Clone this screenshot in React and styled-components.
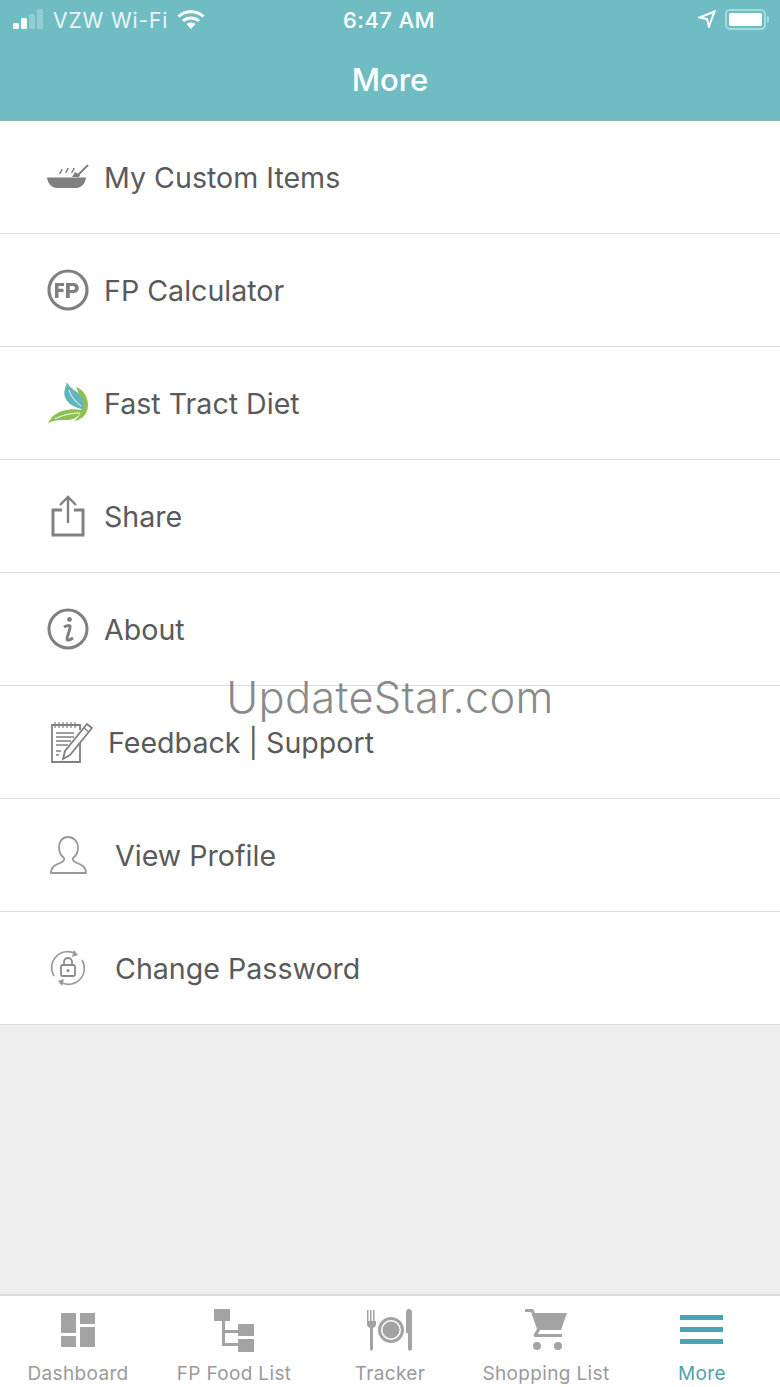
import styled, { createGlobalStyle } from "styled-components";

const GlobalStyle = createGlobalStyle`
  html, body {
    margin: 0;
    padding: 0;
    background: #eeeeee;
  }
  * {
    box-sizing: border-box;
  }
`;

const PanIcon = () => (
  <svg width="42" height="26" viewBox="0 0 42 26">
    <path d="M0 13.500h39c-.5 5-4 10-9 10.500H9c-5-.5-8.500-5.500-9-10.500z" fill="#808080" />
    <path d="M30 12l11-11" stroke="#808080" strokeWidth="2" />
    <path d="M25 13l3-5 5 3-1 2z" fill="#808080" />
    <path d="M13 10c-.5-2 2-2.500 2-5M19 9c-.5-2 2-2.500 2-5M25 9c-.5-2 2-2.500 2-5" fill="none" stroke="#808080" strokeWidth="1.500" />
  </svg>
);

const FpIcon = () => (
  <svg width="42" height="42" viewBox="0 0 42 42">
    <circle cx="21" cy="21" r="19" fill="none" stroke="#808080" strokeWidth="3.200" />
    <path d="M8 14h9v3h-5.500v2.800h5V23h-5v6H8zM19 14h7c3.500 0 5.800 2 5.800 5s-2.300 5-5.800 5h-3.200v5H19zm3.800 3v4H25.500c1.500 0 2.500-.7 2.500-2s-1-2-2.500-2z" fill="#808080" />
  </svg>
);

const LeafIcon = () => (
  <svg width="42" height="44" viewBox="0 0 42 44">
    <path d="M29 6c7 2 12 10 12 18 0 9-6 15-14 16 4-3 6-6 7-10 1-7-1-16-5-24z" fill="#8cc152" />
    <path d="M1 42c3-6 8-10 14-12 7-2 14-2 20-1-2 6-8 10-15 10-8 0-12 0-19 3z" fill="#8cc152" />
    <path d="M20 1c-1 5-4 9-2 15 2 6 9 11 18 12 1-7-1-13-6-17-4-3-8-5-10-10z" fill="#62b5bd" />
    <path d="M22 9c2 7 7 12 12 16" stroke="#fff" strokeWidth="1" fill="none" />
    <path d="M8 38c7-4 16-6 25-6" stroke="#fff" strokeWidth="1" fill="none" />
  </svg>
);

const ShareIcon = () => (
  <svg width="34" height="42" viewBox="0 0 34 42">
    <path d="M11 15H2v25h30V15h-9" fill="none" stroke="#808080" strokeWidth="3" />
    <path d="M17 28V2M9 10l8-8 8 8" fill="none" stroke="#808080" strokeWidth="2.400" />
  </svg>
);

const InfoIcon = () => (
  <svg width="42" height="42" viewBox="0 0 42 42">
    <circle cx="21" cy="21" r="19" fill="none" stroke="#808080" strokeWidth="3" />
    <circle cx="22.500" cy="11.500" r="2.400" fill="#808080" />
    <path d="M17 19c2-1 5-2 6-1 1 2-3 10-3 13 0 2 3 1 6-1" fill="none" stroke="#808080" strokeWidth="3" />
  </svg>
);

const NotesIcon = () => (
  <svg width="42" height="42" viewBox="0 0 42 42" overflow="visible">
    <path d="M33 20v21H5V4h28v5" fill="none" stroke="#808080" strokeWidth="1.800" />
    <path d="M8 1v6M12 1v6M16 1v6M20 1v6M24 1v6M28 1v6" stroke="#808080" strokeWidth="1.200" />
    <path d="M9 12h18M9 16h18M9 20h15M9 24h12M9 30h5M9 34h3" stroke="#808080" strokeWidth="1.600" />
    <path d="M40 3l5 4-22 27-7 4 2-8z" fill="#fff" stroke="#808080" strokeWidth="1.800" />
    <path d="M37 7l5 4" stroke="#808080" strokeWidth="1.500" />
  </svg>
);

const ProfileIcon = () => (
  <svg width="38" height="40" viewBox="0 0 38 40">
    <path d="M19 2c-6 0-9 5-9 10 0 5 2 9 5 11 1 2-1 4-4 5-5 2-9 4-9 10h35c0-6-4-8-9-10-3-1-5-3-4-5 3-2 5-6 5-11 0-5-4-10-10-10z" fill="none" stroke="#9a9a9a" strokeWidth="1.800" />
  </svg>
);

const LockIcon = () => (
  <svg width="36" height="36" viewBox="0 0 36 36">
    <path d="M4 26A16 16 0 0 1 26 4" fill="none" stroke="#9a9a9a" strokeWidth="1.600" />
    <path d="M32 10a16 16 0 0 1-22 22" fill="none" stroke="#9a9a9a" strokeWidth="1.600" />
    <path d="M24 0l4 5-6 2zM12 36l-4-5 6-2z" fill="#9a9a9a" />
    <rect x="11" y="15" width="14" height="11" rx="1.500" fill="none" stroke="#8a8a8a" strokeWidth="1.800" />
    <path d="M14 15v-3a4 4 0 0 1 8 0v3" fill="none" stroke="#8a8a8a" strokeWidth="1.800" />
    <circle cx="18" cy="20.500" r="1.500" fill="#8a8a8a" />
  </svg>
);

const DashboardIcon = () => (
  <svg width="34" height="34" viewBox="0 0 34 34" fill="#a3a3a3">
    <rect x="0" y="0" width="15" height="20" />
    <rect x="19" y="0" width="15" height="11" />
    <rect x="0" y="23" width="15" height="11" />
    <rect x="19" y="14" width="15" height="20" />
  </svg>
);

const TreeIcon = () => (
  <svg width="40" height="43" viewBox="0 0 40 43" fill="#a3a3a3">
    <rect x="0" y="0" width="16" height="12" />
    <rect x="24" y="15" width="16" height="12" />
    <rect x="24" y="30" width="16" height="13" />
    <path d="M8 12h3v9h13v3H11v10h13v3H8z" />
  </svg>
);

const TrackerIcon = () => (
  <svg width="46" height="42" viewBox="0 0 46 42" fill="#a3a3a3">
    <path d="M0 1h1.500v11H3V1h1.500v11H6V1h1.500v11H9V1v14c0 2-1 3-3 4v21c0 2-3 2-3 0V19c-2-1-3-2-3-4z" />
    <path d="M41 0c3 0 4 1 4 3v37c0 2-4 2-4 0V24h-2V4c0-2 1-4 2-4z" />
    <path d="M24 8a13 13 0 1 0 0 26 13 13 0 0 0 0-26zm0 3a10 10 0 1 1 0 20 10 10 0 0 1 0-20z" />
    <circle cx="24" cy="21" r="8.500" />
  </svg>
);

const CartIcon = () => (
  <svg width="42" height="42" viewBox="0 0 42 42" fill="#a3a3a3">
    <path d="M0 0h8l2 4h32l-6 17H15l-2 4h24v3H9.500l-1-2 3.500-6L6 3H0z" />
    <circle cx="12" cy="37" r="4" />
    <circle cx="33" cy="37" r="4" />
  </svg>
);

const MenuIcon = () => (
  <svg width="44" height="30" viewBox="0 0 44 30" fill="#4ba3b1">
    <rect x="0" y="0" width="43" height="5" />
    <rect x="0" y="12" width="43" height="5" />
    <rect x="0" y="24" width="43" height="5" />
  </svg>
);

const menuItems = [
  { label: "My Custom Items", icon: <PanIcon />, gap: 15 },
  { label: "FP Calculator", icon: <FpIcon />, gap: 15 },
  { label: "Fast Tract Diet", icon: <LeafIcon />, gap: 15 },
  { label: "Share", icon: <ShareIcon />, gap: 15 },
  { label: "About", icon: <InfoIcon />, gap: 15 },
  { label: "Feedback | Support", icon: <NotesIcon />, gap: 19 },
  { label: "View Profile", icon: <ProfileIcon />, gap: 26 },
  { label: "Change Password", icon: <LockIcon />, gap: 26 },
];

const tabs = [
  { label: "Dashboard", icon: <DashboardIcon /> },
  { label: "FP Food List", icon: <TreeIcon /> },
  { label: "Tracker", icon: <TrackerIcon /> },
  { label: "Shopping List", icon: <CartIcon /> },
  { label: "More", icon: <MenuIcon />, active: true },
];

export default function App() {
  return (
    <>
      <GlobalStyle />
      <Page>
        <Header>
          <StatusBar>
            <StatusSide>
              <Signal>
                <Bar $h={6} />
                <Bar $h={11} />
                <Bar $h={15} $dim />
                <Bar $h={20} $dim />
              </Signal>
              <Carrier>VZW Wi-Fi</Carrier>
              <svg width="28" height="20" viewBox="0 0 28 20" fill="none" stroke="#fff" strokeWidth="3">
                <path d="M1.500 7.500c7-6.500 18-6.500 25 0" />
                <path d="M6 12c4.500-4 11.500-4 16 0" />
                <path d="M14 20l-4.500-5c2.500-2 6.500-2 9 0z" fill="#fff" stroke="none" />
              </svg>
            </StatusSide>
            <Clock>6:47 AM</Clock>
            <StatusRight>
              <svg width="18" height="18" viewBox="0 0 18 18" fill="none" stroke="#fff" strokeWidth="2">
                <path d="M16.500 1.500L1.500 7.500l7.500 1.500 2 7.500z" />
              </svg>
              <Battery>
                <BatteryFill />
              </Battery>
              <BatteryCap />
            </StatusRight>
          </StatusBar>
          <Title>More</Title>
        </Header>

        <Menu>
          {menuItems.map((item) => (
            <MenuRow key={item.label} $gap={item.gap}>
              <IconSlot>{item.icon}</IconSlot>
              <RowLabel>{item.label}</RowLabel>
            </MenuRow>
          ))}
        </Menu>

        <Filler />

        <TabBar>
          {tabs.map((tab) => (
            <Tab key={tab.label}>
              <TabIcon>{tab.icon}</TabIcon>
              <TabLabel $active={tab.active}>{tab.label}</TabLabel>
            </Tab>
          ))}
        </TabBar>

        <Watermark>UpdateStar.com</Watermark>
      </Page>
    </>
  );
}

const Page = styled.div`
  position: relative;
  display: flex;
  flex-direction: column;
  width: 780px;
  height: 1387px;
  overflow: hidden;
  background: #eeeeee;
  font-family: Inter, "Liberation Sans", sans-serif;
`;

const Header = styled.header`
  height: 121px;
  flex-shrink: 0;
  background: #70bcc3;
  border-bottom: 1px solid #8fb5b5;
`;

const StatusBar = styled.div`
  display: grid;
  grid-template-columns: 1fr auto 1fr;
  align-items: center;
  height: 38px;
  padding: 0 11px 0 13px;
  color: #fff;
`;

const StatusSide = styled.div`
  display: flex;
  align-items: center;
`;

const StatusRight = styled(StatusSide)`
  justify-content: flex-end;
`;

const Signal = styled.div`
  display: flex;
  align-items: flex-end;
  gap: 2px;
  height: 20px;
  margin-right: 10px;
`;

const Bar = styled.span`
  width: 6px;
  height: ${(p) => p.$h}px;
  border-radius: 1.500px;
  background: ${(p) => (p.$dim ? "#93cdd2" : "#fff")};
`;

const Carrier = styled.span`
  margin-right: 9px;
  padding-top: 2px;
  font-size: 21px;
  letter-spacing: 0.900px;
  color: #eaf6f7;
`;

const Clock = styled.span`
  margin-right: 4px;
  padding-top: 2px;
  font-size: 22px;
  font-weight: 500;
  letter-spacing: 0.400px;
`;

const Battery = styled.div`
  display: flex;
  align-items: center;
  justify-content: center;
  width: 41px;
  height: 21px;
  margin-left: 9px;
  border: 2px solid #a6dadd;
  border-radius: 5px;
`;

const BatteryFill = styled.div`
  width: 33px;
  height: 13px;
  border-radius: 2px;
  background: #fff;
`;

const BatteryCap = styled.div`
  width: 2px;
  height: 7px;
  margin-left: 1px;
  border-radius: 0 2px 2px 0;
  background: #a6dadd;
`;

const Title = styled.h1`
  margin: 0;
  padding-top: 5px;
  font-size: 31px;
  font-weight: 500;
  line-height: 73px;
  text-align: center;
  color: #fff;
`;

const Menu = styled.ul`
  flex-shrink: 0;
  margin: 0;
  padding: 0;
  list-style: none;
  background: #fff;
`;

const MenuRow = styled.li`
  display: flex;
  align-items: center;
  gap: ${(p) => p.$gap}px;
  height: 113px;
  padding-left: 47px;
  border-bottom: 1px solid #dcdcdc;
`;

const IconSlot = styled.div`
  display: flex;
  justify-content: center;
  align-items: center;
  width: 42px;
  flex-shrink: 0;
`;

const RowLabel = styled.span`
  font-size: 28.600px;
  color: #5a5a5a;
`;

const Filler = styled.div`
  flex: 1;
  background: #eeeeee;
`;

const TabBar = styled.nav`
  display: grid;
  grid-template-columns: repeat(5, 156px);
  height: 93px;
  flex-shrink: 0;
  background: #fff;
  border-top: 2px solid #dddddd;
`;

const Tab = styled.div`
  display: flex;
  flex-direction: column;
  align-items: center;
`;

const TabIcon = styled.div`
  display: flex;
  align-items: center;
  justify-content: center;
  height: 44px;
  margin-top: 12px;
`;

const TabLabel = styled.span`
  margin-top: 10px;
  font-size: 19px;
  letter-spacing: 0.350px;
  white-space: nowrap;
  color: ${(p) => (p.$active ? "#4ba3b1" : "#9a9a9a")};
`;

const Watermark = styled.div`
  position: absolute;
  top: 670px;
  left: 0;
  width: 100%;
  font-size: 43.400px;
  font-weight: 300;
  line-height: 54px;
  letter-spacing: 0.300px;
  text-align: center;
  color: rgba(100, 100, 100, 0.75);
`;
